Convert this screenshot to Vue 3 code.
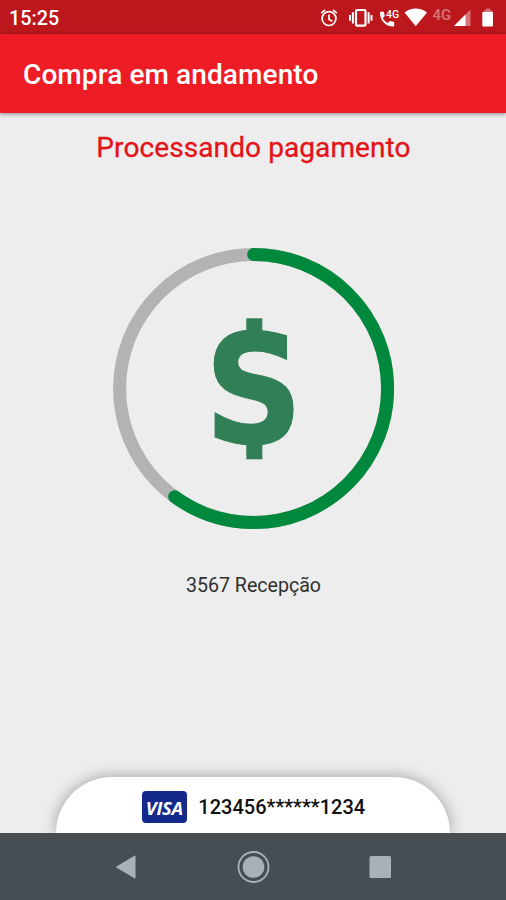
<template>
  <div class="screen">
    <!-- Barra de status -->
    <div class="status-bar">
      <span class="clock">{{ time }}</span>
      <svg class="status-icons" width="186" height="34" viewBox="0 0 186 34" fill="#fff">
        <g fill="none" stroke="#fff" stroke-width="1.7">
          <circle cx="9" cy="18.6" r="6.9" />
          <path d="M9 14.5v4.7l3.3 2.2M1.2 13.2l3.8-3.4M16.8 13.2L13 9.8" />
          <rect x="36" y="10" width="9.5" height="15.6" rx="1.2" stroke-width="2.2" />
          <path d="M32.9 12.2v11.2M48.6 12.2v11.2M30 15v5.8M51.5 15v5.8" stroke-width="2" />
        </g>
        <path d="M61 11.8h2.8l1 4.2-2 2.1c1.3 2.4 2.7 3.8 5 5l2.1-2 4.3 1v3.4c0 .6-.4 1-1 1C65.5 26.5 60 20.5 60 12.8c0-.6.4-1 1-1z" />
        <text x="66" y="18" class="tiny">4G</text>
        <path d="M84.5 12.5C91 7 100.500 7 107 12.500L95.700 26.300z" />
        <text x="112.5" y="19.8" class="network">4G</text>
        <path d="M150.500 9.500V26H134z" opacity=".4" />
        <path d="M145.500 14.500V26H134z" />
        <path d="M164 12h8v-2h-2V8.500h-4V10h-2z" opacity=".4" />
        <path d="M162.300 12h10.700v13.600q0 1-1 1h-8.700q-1 0-1-1z" />
      </svg>
    </div>

    <header class="app-bar">Compra em andamento</header>

    <main class="content">
      <h1 class="title">Processando pagamento</h1>

      <svg class="progress" width="282" height="283" viewBox="0 0 282 283">
        <circle class="track" cx="141.6" cy="141.5" :r="radius" />
        <circle
          class="arc"
          cx="141.6"
          cy="141.5"
          :r="radius"
          :stroke-dasharray="dash"
          transform="rotate(-90 141.6 141.5)"
        />
        <!-- Cifrão: S com as hastes em cima e embaixo -->
        <g class="dollar">
          <text x="141.8" y="196" text-anchor="middle">S</text>
          <rect x="134.3" y="71.3" width="16" height="18" />
          <rect x="134.3" y="192" width="16" height="20.3" />
        </g>
      </svg>

      <p class="place">3567 Recepção</p>

      <div class="card">
        <span class="visa"><span class="visa-name">VISA</span></span>
        <span class="card-number">{{ cardNumber }}</span>
      </div>
    </main>

    <!-- Botões de navegação -->
    <nav class="nav-bar">
      <svg width="506" height="67" viewBox="0 0 506 67" fill="#a9b1b5">
        <path d="M115.500 34L134.500 22.700q1-.5 1 .7v21.200q0 1.200-1 .7z" />
        <circle cx="253.5" cy="34" r="15" fill="none" stroke="#a9b1b5" stroke-width="1.8" />
        <circle cx="253.5" cy="34" r="10.8" />
        <rect x="369.5" y="23" width="21.5" height="22" rx="1.5" />
      </svg>
    </nav>
  </div>
</template>

<script setup>
import { ref, computed } from 'vue'

const time = ref('15:25')
const cardNumber = ref('123456******1234')
const percent = ref(60)

const radius = 134

// Comprimento do arco conforme o progresso
const dash = computed(() => {
  const total = 2 * Math.PI * radius
  return `${(total * percent.value) / 100} ${total}`
})
</script>

<style>
body {
  margin: 0;
}
</style>

<style scoped>
.screen {
  display: flex;
  flex-direction: column;
  width: 506px;
  height: 900px;
  overflow: hidden;
  background: #ededed;
  font-family: Roboto, sans-serif;
}

.status-bar {
  display: flex;
  align-items: center;
  justify-content: space-between;
  height: 34px;
  padding-left: 9px;
  background: #bc171d;
  color: #fff;
}

.clock {
  font-size: 19.8px;
  font-weight: 500;
  padding-top: 2px;
}

.tiny {
  font-size: 10.5px;
  font-weight: 500;
}

.network {
  font-size: 15px;
  font-weight: 500;
  opacity: 0.4;
}

.app-bar {
  display: flex;
  align-items: center;
  height: 78px;
  padding: 1px 0 0 23px;
  background: #ee1c25;
  color: #fff;
  font-size: 28px;
  font-weight: 500;
  letter-spacing: 0.1px;
  box-shadow: 0 1px 4px rgba(0, 0, 0, 0.45);
  z-index: 1;
}

.content {
  flex: 1;
  display: flex;
  flex-direction: column;
  align-items: center;
  overflow: hidden;
}

.title {
  margin: 18px 0 0;
  padding-left: 1px;
  color: #e41318;
  font-size: 28px;
  font-weight: 400;
  line-height: 34px;
  letter-spacing: 0.1px;
  -webkit-text-stroke: 0.3px #e41318;
}

.progress {
  display: block;
  margin-top: 82px;
}

.track,
.arc {
  fill: none;
  stroke-width: 13;
}

.track {
  stroke: #b3b3b3;
}

.arc {
  stroke: #00893d;
  stroke-linecap: round;
}

.dollar {
  fill: #317f56;
  font-family: "DejaVu Sans Condensed", "DejaVu Sans", sans-serif;
  font-size: 152px;
  font-weight: 700;
  font-stretch: condensed;
}

.dollar text {
  stroke: #317f56;
  stroke-width: 1.2;
}

.place {
  margin: 44px 0 0;
  padding-left: 1px;
  color: #303030;
  font-size: 19.6px;
  line-height: 24px;
}

.card {
  display: flex;
  align-items: center;
  justify-content: center;
  width: 394px;
  height: 56px;
  margin-top: auto;
  padding: 4px 0 0 1px;
  box-sizing: border-box;
  border-radius: 56px 56px 0 0;
  background: #fff;
  box-shadow: 0 0 15px rgba(0, 0, 0, 0.35);
}

.visa {
  display: flex;
  align-items: center;
  justify-content: center;
  width: 45px;
  height: 32px;
  margin-right: 11.5px;
  border-radius: 4px;
  background: #14298a;
  color: #fff;
}

.visa-name {
  font-family: "Open Sans", sans-serif;
  font-size: 18.5px;
  font-style: italic;
  font-weight: 700;
  letter-spacing: -0.3px;
}

.card-number {
  color: #111;
  font-size: 20px;
  font-weight: 500;
}

.nav-bar {
  height: 67px;
  background: #464e53;
}
</style>
